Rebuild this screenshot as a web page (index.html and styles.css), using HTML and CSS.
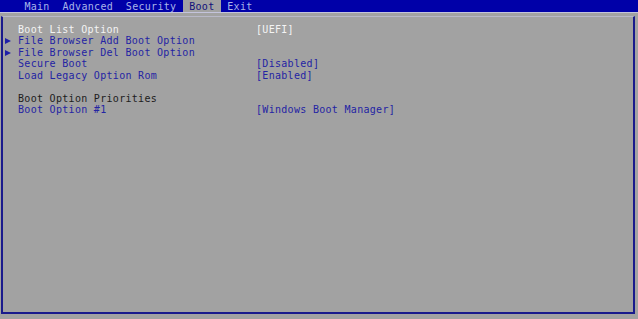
FILE: index.html
```html
<!DOCTYPE html>
<html>
<head>
<meta charset="utf-8">
<link rel="stylesheet" href="styles.css">
</head>
<body>
<div class="menubar">
  <span class="tab">Main</span>
  <span class="tab">Advanced</span>
  <span class="tab">Security</span>
  <span class="tab active">Boot</span>
  <span class="tab">Exit</span>
</div>
<div class="rule"></div>
<div class="frame">
  <div class="rows">
    <div class="row"><span class="mark"></span><span class="label white">Boot List Option</span><span class="value white">[UEFI]</span></div>
    <div class="row"><span class="mark"><i class="arrow"></i></span><span class="label blue">File Browser Add Boot Option</span><span class="value"></span></div>
    <div class="row"><span class="mark"><i class="arrow"></i></span><span class="label blue">File Browser Del Boot Option</span><span class="value"></span></div>
    <div class="row"><span class="mark"></span><span class="label blue">Secure Boot</span><span class="value blue">[Disabled]</span></div>
    <div class="row"><span class="mark"></span><span class="label blue">Load Legacy Option Rom</span><span class="value blue">[Enabled]</span></div>
    <div class="row"><span class="mark"></span><span class="label"></span><span class="value"></span></div>
    <div class="row"><span class="mark"></span><span class="label dark">Boot Option Priorities</span><span class="value"></span></div>
    <div class="row"><span class="mark"></span><span class="label blue">Boot Option #1</span><span class="value blue">[Windows Boot Manager]</span></div>
  </div>
</div>
</body>
</html>
```
FILE: styles.css
```css
html, body {
  margin: 0;
  padding: 0;
  background: #a2a2a2;
  width: 638px;
  height: 319px;
  overflow: hidden;
  font-family: "DejaVu Sans Mono", "Liberation Mono", monospace;
  font-size: 10px;
  letter-spacing: 0.3px;
}
.menubar {
  height: 12px;
  background: #0000a8;
  display: flex;
  padding-left: 18px;
}
.tab {
  padding: 0 6.4px;
  line-height: 13px;
  height: 12px;
  color: #a8b4e8;
  white-space: pre;
}
.tab.active {
  background: #a2a2a2;
  color: #10107a;
}
.rule {
  height: 1px;
  background: #c4c4dc;
}
.frame {
  margin: 3px 3px 4px 1px;
  height: 298px;
  border-left: 2px solid #1a1a8c;
  border-right: 2px solid #1a1a8c;
  border-bottom: 2px solid #1a1a8c;
  border-top: 1px solid #b8b8c8;
  box-sizing: border-box;
  padding-top: 7px;
}
.rows {
  display: flex;
  flex-direction: column;
}
.row {
  display: grid;
  grid-template-columns: 15px 238px 1fr;
  height: 11.43px;
  line-height: 11.43px;
  white-space: pre;
}
.mark {
  display: flex;
  align-items: center;
  padding-left: 2px;
}
.arrow {
  display: block;
  width: 0;
  height: 0;
  border-left: 6px solid #2020a8;
  border-top: 3.5px solid transparent;
  border-bottom: 3.5px solid transparent;
}
.white { color: #f4f4f4; }
.blue { color: #2424a4; }
.dark { color: #1c1c1c; }
```
